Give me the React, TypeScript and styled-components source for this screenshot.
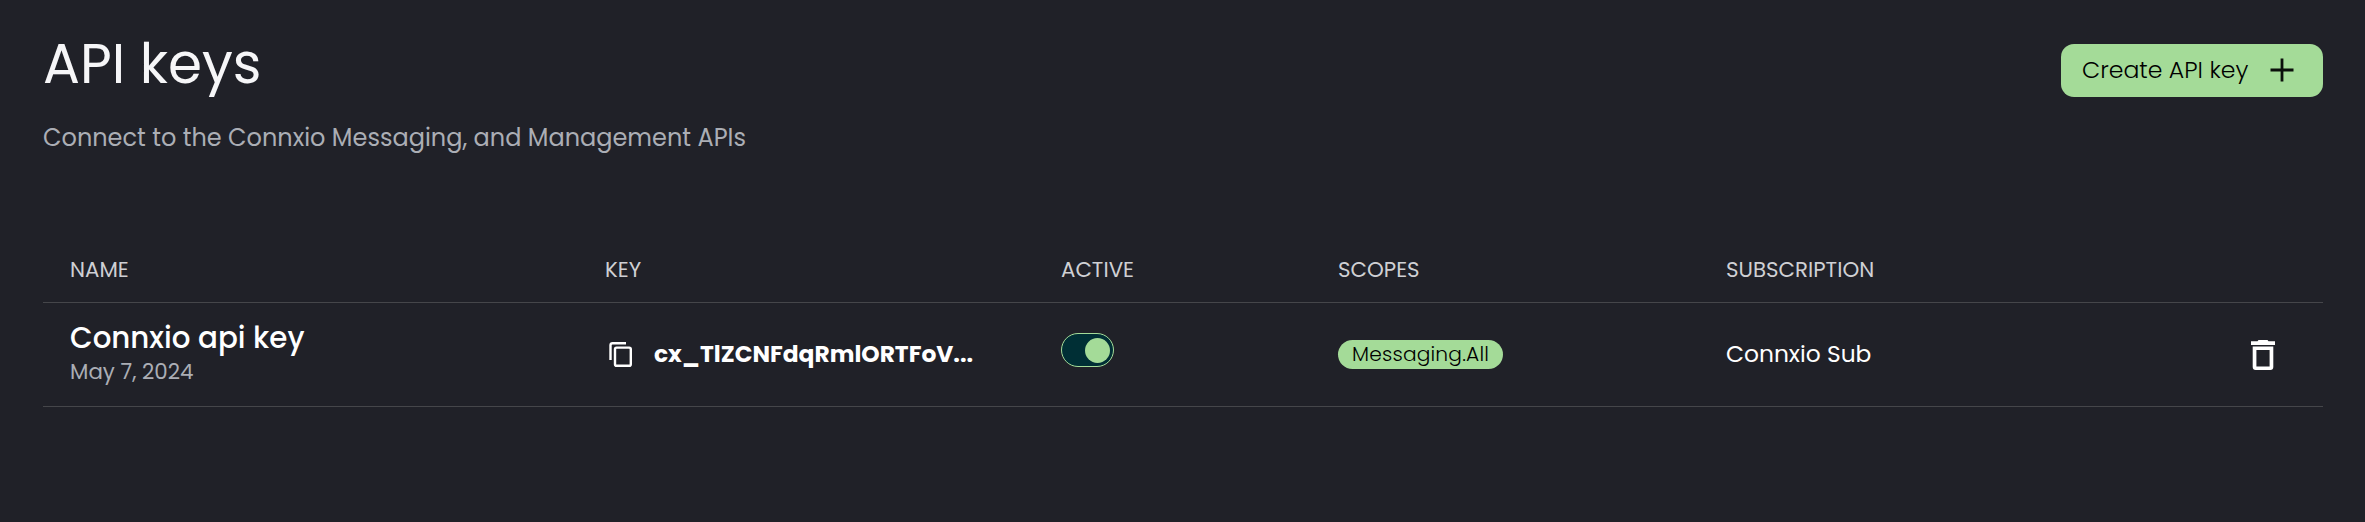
import React from "react";
import styled, { createGlobalStyle } from "styled-components";

const GlobalStyle = createGlobalStyle`
  * { box-sizing: border-box; }
  body {
    margin: 0;
    background: #202128;
    color: #fff;
    font-family: Poppins, Inter, sans-serif;
  }
`;

const Page = styled.main`
  min-height: 522px;
  padding: 29px 42px 0 43px;
`;

const Header = styled.header`
  display: flex;
  justify-content: space-between;
  align-items: flex-start;
  height: 210px;
`;

const Title = styled.h1`
  margin: 0;
  font-size: 54.8px;
  line-height: 70px;
  font-weight: 400;
  color: #f6f6f8;
`;

const Subtitle = styled.p`
  margin: 21px 0 0;
  font-size: 24px;
  line-height: 36px;
  color: #abaeb5;
`;

const CreateButton = styled.button`
  display: flex;
  align-items: center;
  justify-content: space-between;
  width: 262px;
  height: 53px;
  margin-top: 15px;
  padding: 0 29px 1px 21px;
  border: 0;
  border-radius: 13px;
  background: #a4db98;
  color: #000;
  font: inherit;
  font-size: 23.6px;
  font-weight: 300;
  white-space: nowrap;
`;

const ButtonLabel = styled.span`
  padding-bottom: 1px;
`;

const Row = styled.div`
  display: grid;
  grid-template-columns: 535px 456px 277px 388px 1fr;
  align-items: center;
  padding-left: 27px;
  border-bottom: 1px solid #45464a;
`;

const HeadRow = styled(Row)`
  height: 64px;
  padding-bottom: 3px;
  font-size: 21.35px;
  color: #cfd0d4;
`;

const BodyRow = styled(Row)`
  height: 104px;
`;

const NameCell = styled.div`
  padding-bottom: 3px;
`;

const KeyName = styled.div`
  font-size: 29.3px;
  line-height: 36px;
  font-weight: 500;
`;

const Created = styled.div`
  font-size: 21.35px;
  line-height: 31px;
  color: #abaeb5;
`;

const KeyCell = styled.div`
  display: flex;
  align-items: center;
  gap: 22px;
  padding-left: 4px;
`;

const KeyValue = styled.span`
  padding-bottom: 2px;
  font-size: 23.35px;
  font-weight: 700;
`;

const Toggle = styled.div`
  display: flex;
  align-items: center;
  justify-content: flex-end;
  width: 53px;
  height: 34px;
  margin-bottom: 9px;
  padding-right: 3px;
  border: 1px solid #a4db98;
  border-radius: 17px;
  background: #002f35;
`;

const Knob = styled.span`
  width: 25px;
  height: 25px;
  border-radius: 50%;
  background: #a4db98;
`;

const Scope = styled.div`
  display: flex;
  align-items: center;
  justify-content: center;
  width: 165px;
  height: 29px;
  padding-bottom: 1px;
  border-radius: 15px;
  background: #a4db98;
  color: #000;
  font-size: 20.2px;
  font-weight: 300;
  font-kerning: none;
  letter-spacing: 0.2px;
`;

const Subscription = styled.div`
  padding-bottom: 2px;
  font-size: 23.35px;
`;

const LastCell = styled.div`
  display: flex;
  align-items: center;
  justify-content: space-between;
  padding-right: 48px;
`;

const PlusIcon = () => (
  <svg width="24" height="24" viewBox="0 0 24 24">
    <path d="M12 0.5V23.5M0.5 12H23.5" stroke="#0b0f0b" strokeWidth="2.8" />
  </svg>
);

const CopyIcon = () => (
  <svg width="23" height="25" viewBox="0 0 23 25" fill="none" stroke="#fff" strokeWidth="2.4">
    <path d="M1.5 18V3.2Q1.5 1.2 3.5 1.2H17" />
    <rect x="6" y="5.6" width="15.8" height="18.2" rx="1.6" />
  </svg>
);

const TrashIcon = () => (
  <svg width="24" height="30" viewBox="0 0 24 30">
    <path d="M0 1.2H6.5L7.5 0H16.5L17.5 1.2H24V5H0Z" fill="#fff" />
    <path
      d="M1.7 6.5H22.3V27Q22.3 30 19.3 30H4.7Q1.7 30 1.7 27ZM5.4 10V26.4H18.6V10Z"
      fill="#fff"
      fillRule="evenodd"
    />
  </svg>
);

export default function App() {
  return (
    <>
      <GlobalStyle />
      <Page>
        <Header>
          <div>
            <Title>API keys</Title>
            <Subtitle>Connect to the Connxio Messaging, and Management APIs</Subtitle>
          </div>
          <CreateButton>
            <ButtonLabel>Create API key</ButtonLabel>
            <PlusIcon />
          </CreateButton>
        </Header>
        <HeadRow>
          <span>NAME</span>
          <span>KEY</span>
          <span>ACTIVE</span>
          <span>SCOPES</span>
          <span>SUBSCRIPTION</span>
        </HeadRow>
        <BodyRow>
          <NameCell>
            <KeyName>Connxio api key</KeyName>
            <Created>May 7, 2024</Created>
          </NameCell>
          <KeyCell>
            <CopyIcon />
            <KeyValue>cx_TlZCNFdqRmlORTFoV...</KeyValue>
          </KeyCell>
          <Toggle><Knob /></Toggle>
          <Scope>Messaging.All</Scope>
          <LastCell>
            <Subscription>Connxio Sub</Subscription>
            <TrashIcon />
          </LastCell>
        </BodyRow>
      </Page>
    </>
  );
}
